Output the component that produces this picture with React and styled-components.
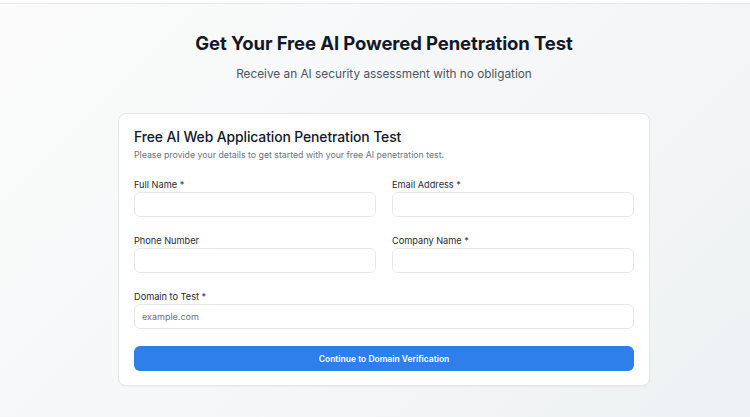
import React from "react";
import styled, { createGlobalStyle } from "styled-components";

const GlobalStyle = createGlobalStyle`
  * { box-sizing: border-box; }
  html, body { margin: 0; padding: 0; }
  body {
    font-family: Inter, "Noto Sans", "Liberation Sans", sans-serif;
    color: #111827;
    -webkit-font-smoothing: antialiased;
  }
`;

const Page = styled.div`
  min-height: 417px;
  border-top: 3px solid #ffffff;
  box-shadow: inset 0 1px 0 #e9eaec;
  background: linear-gradient(135deg, #fbfbfb 0%, #f4f6f7 60%, #eef1f3 100%);
  display: flex;
  flex-direction: column;
  align-items: center;
  padding: 28px 0 0 18px;
`;

const Heading = styled.h1`
  margin: 0;
  font-size: 18.5px;
  line-height: 24px;
  font-weight: 700;
  letter-spacing: -0.1px;
  color: #111827;
`;

const Subtitle = styled.p`
  margin: 10px 0 0;
  font-size: 11.8px;
  line-height: 18px;
  color: #4b5563;
`;

const Card = styled.form`
  margin-top: 30px;
  width: 532px;
  background: #ffffff;
  border: 1px solid #e5e7eb;
  border-radius: 8px;
  box-shadow: 0 1px 2px rgba(0, 0, 0, 0.04);
  padding: 13px 15px 14px;
`;

const CardTitle = styled.h2`
  margin: 0;
  font-size: 13.9px;
  line-height: 20px;
  font-weight: 500;
  letter-spacing: -0.1px;
  color: #111827;
`;

const CardText = styled.p`
  margin: 2px 0 0;
  font-size: 8.75px;
  line-height: 13px;
  color: #6b7280;
`;

const Grid = styled.div`
  margin-top: 18px;
  display: grid;
  grid-template-columns: 1fr 1fr;
  column-gap: 16px;
  row-gap: 19px;
`;

const Field = styled.label`
  display: flex;
  flex-direction: column;
  gap: 2px;
  grid-column: ${({ $wide }) => ($wide ? "1 / -1" : "auto")};
`;

const Label = styled.span`
  font-size: 9.2px;
  line-height: 10px;
  font-weight: 400;
  color: #1f2937;
`;

const Input = styled.input`
  height: 25px;
  width: 100%;
  border: 1px solid #e5e7eb;
  border-radius: 6px;
  padding: 0 7px;
  font-family: inherit;
  font-size: 9px;
  color: #111827;
  background: #ffffff;
  outline: none;
  &::placeholder { color: #6b7280; }
`;

const Button = styled.button`
  display: block;
  margin-top: 17px;
  width: 100%;
  height: 25px;
  border: none;
  border-radius: 6px;
  background: #2f7fea;
  color: #ffffff;
  font-family: inherit;
  font-size: 8.5px;
  font-weight: 600;
  cursor: pointer;
`;

const fields = [
  { name: "fullName", label: "Full Name *" },
  { name: "email", label: "Email Address *", type: "email" },
  { name: "phone", label: "Phone Number", type: "tel" },
  { name: "company", label: "Company Name *" },
  { name: "domain", label: "Domain to Test *", placeholder: "example.com", wide: true },
];

export default function App() {
  return (
    <>
      <GlobalStyle />
      <Page>
        <Heading>Get Your Free AI Powered Penetration Test</Heading>
        <Subtitle>Receive an AI security assessment with no obligation</Subtitle>
        <Card onSubmit={(e) => e.preventDefault()}>
          <CardTitle>Free AI Web Application Penetration Test</CardTitle>
          <CardText>Please provide your details to get started with your free AI penetration test.</CardText>
          <Grid>
            {fields.map((f) => (
              <Field key={f.name} $wide={f.wide}>
                <Label>{f.label}</Label>
                <Input name={f.name} type={f.type || "text"} placeholder={f.placeholder} />
              </Field>
            ))}
          </Grid>
          <Button type="submit">Continue to Domain Verification</Button>
        </Card>
      </Page>
    </>
  );
}
